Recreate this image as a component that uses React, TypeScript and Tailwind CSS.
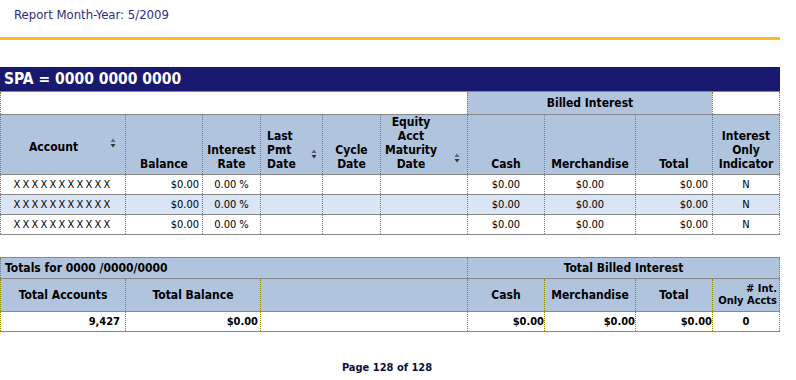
const cols =
  'grid grid-cols-[125px_77px_58px_62px_58px_87px_77px_91px_77px_68px]'
const cell = 'border-l border-dotted border-[#8a8a00]'
const lastCell = 'border-x border-dotted border-[#8a8a00]'

function SortIcon({ className = '' }: { className?: string }) {
  return (
    <svg width="6" height="10" viewBox="0 0 6 10" className={'shrink-0 ' + className}>
      <path d="M3 0.5 L5.5 4 H0.5 Z" fill="#666" />
      <path d="M3 9.5 L5.5 6 H0.5 Z" fill="#333" />
    </svg>
  )
}

const rows = [0, 1, 2]

export default function App() {
  return (
    <div className="w-[796px] h-[380px] bg-white font-['DejaVu_Sans_Condensed','DejaVu_Sans',Tahoma,sans-serif] text-black">
      <div className="w-[780px]">
        {/* report header */}
        <div className="h-[37px] pl-[14px] pt-[7px] text-[13px] leading-[16px] text-[#2e2e80]">
          Report Month-Year: 5/2009
        </div>
        <div className="h-[3px] bg-[#f5bd1f]" />
        <div className="h-[27px]" />

        {/* SPA title */}
        <div className="h-[25px] bg-[#191970] border-b border-[#888] pl-[4px] text-[15.5px] font-bold leading-[24px] text-white">
          SPA = 0000 0000 0000
        </div>

        {/* group header */}
        <div className={cols + ' h-[23px] border-b border-[#888] text-[12px] font-bold'}>
          <div className={cell + ' col-span-6'} />
          <div className={cell + ' col-span-3 flex items-center justify-center bg-[#b0c4de]'}>
            Billed Interest
          </div>
          <div className={lastCell} />
        </div>

        {/* column headers */}
        <div className={cols + ' h-[60px] border-b border-[#888] bg-[#b0c4de] text-[12px] font-bold leading-[14px]'}>
          <div className={cell + ' flex items-center justify-between pl-[28px] pr-[9px] pt-[5px]'}>
            <span>Account</span>
            <SortIcon className="mb-[8px]" />
          </div>
          <div className={cell + ' flex items-end justify-center pb-[3px]'}>Balance</div>
          <div className={cell + ' flex items-end justify-center pb-[3px] text-center'}>
            Interest
            <br />
            Rate
          </div>
          <div className={cell + ' flex items-end pl-[6px] pr-[5px] pb-[3px]'}>
            <span>
              Last
              <br />
              Pmt
              <br />
              Date
            </span>
            <SortIcon className="ml-auto mb-[12px]" />
          </div>
          <div className={cell + ' flex items-end justify-center pb-[3px] text-center'}>
            Cycle
            <br />
            Date
          </div>
          <div className={cell + ' flex items-end pb-[3px] pr-[7px]'}>
            <span className="w-[60px] text-center">
              Equity
              <br />
              Acct
              <br />
              Maturity
              <br />
              Date
            </span>
            <SortIcon className="ml-auto mb-[8px]" />
          </div>
          <div className={cell + ' flex items-end justify-center pb-[3px]'}>Cash</div>
          <div className={cell + ' flex items-end justify-center pb-[3px]'}>Merchandise</div>
          <div className={cell + ' flex items-end justify-center pb-[3px]'}>Total</div>
          <div className={lastCell + ' flex items-end justify-center pb-[3px] text-center'}>
            Interest
            <br />
            Only
            <br />
            Indicator
          </div>
        </div>

        {/* data rows */}
        {rows.map((r) => (
          <div
            key={r}
            className={
              cols +
              ' h-[20px] border-b border-[#888] text-[11px] leading-[19px] ' +
              (r === 1 ? 'bg-[#d9e4f5]' : 'bg-white')
            }
          >
            <div className={cell + ' text-center tracking-[2.2px]'}>XXXXXXXXXXX</div>
            <div className={cell + ' text-right pr-[3px]'}>$0.00</div>
            <div className={cell + ' text-center'}>0.00 %</div>
            <div className={cell} />
            <div className={cell} />
            <div className={cell} />
            <div className={cell + ' text-center'}>$0.00</div>
            <div className={cell + ' text-center'}>$0.00</div>
            <div className={cell + ' text-right pr-[4px]'}>$0.00</div>
            <div className={lastCell + ' text-center'}>N</div>
          </div>
        ))}

        <div className="h-[22px]" />

        {/* totals */}
        <div className="border-t border-[#888]">
          <div className={cols + ' h-[21px] border-b border-[#888] bg-[#b0c4de] text-[12px] font-bold leading-[20px]'}>
            <div className={cell + ' col-span-6 pl-[4px]'}>Totals for 0000 /0000/0000</div>
            <div className={lastCell + ' col-span-4 text-center'}>Total Billed Interest</div>
          </div>
          <div className={cols + ' h-[33px] border-b border-[#888] bg-[#b0c4de] text-[12px] font-bold'}>
            <div className={cell + ' flex items-center justify-center'}>Total Accounts</div>
            <div className={cell + ' col-span-2 flex items-center justify-center'}>Total Balance</div>
            <div className={cell + ' col-span-3'} />
            <div className={cell + ' flex items-center justify-center'}>Cash</div>
            <div className={cell + ' flex items-center justify-center'}>Merchandise</div>
            <div className={cell + ' flex items-center justify-center'}>Total</div>
            <div className={lastCell + ' flex items-center justify-end pr-[2px] text-right text-[11px] leading-[12px]'}>
              # Int.
              <br />
              Only Accts
            </div>
          </div>
          <div className={cols + ' h-[20px] border-b border-[#888] text-[11px] font-bold leading-[19px]'}>
            <div className={cell + ' text-right pr-[5px]'}>9,427</div>
            <div className={cell + ' col-span-2 text-right pr-[2px]'}>$0.00</div>
            <div className={cell + ' col-span-3'} />
            <div className={cell + ' text-right'}>$0.00</div>
            <div className={cell + ' text-right'}>$0.00</div>
            <div className={cell + ' text-right'}>$0.00</div>
            <div className={lastCell + ' text-center'}>0</div>
          </div>
        </div>

        <div className="mt-[29px] pr-[6px] text-center text-[11px] font-bold leading-[14px] text-[#10103a]">
          Page 128 of 128
        </div>
      </div>
    </div>
  )
}
